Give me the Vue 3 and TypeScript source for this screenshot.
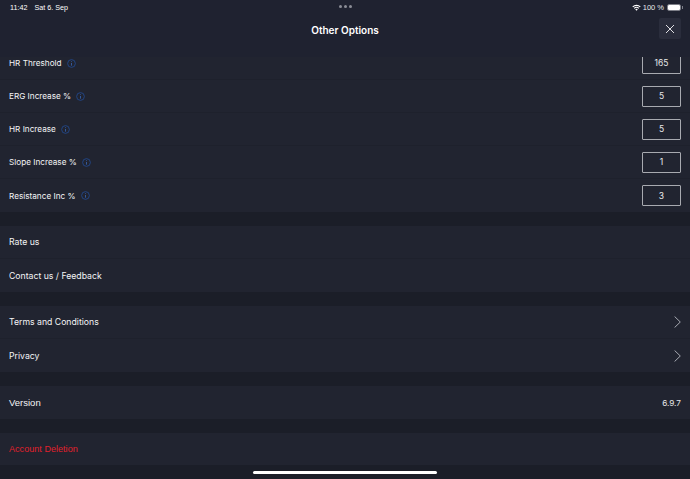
<script setup lang="ts">
interface InputRow {
  label: string
  value: string
}

const inputRows: InputRow[] = [
  { label: 'HR Threshold', value: '165' },
  { label: 'ERG Increase %', value: '5' },
  { label: 'HR Increase', value: '5' },
  { label: 'Slope Increase %', value: '1' },
  { label: 'Resistance Inc %', value: '3' },
]
</script>

<template>
  <div class="screen">
    <header class="top">
      <div class="status">
        <span class="time">11:42</span>
        <span class="date">Sat 6. Sep</span>
        <span class="dots"><i></i><i></i><i></i></span>
        <span class="status-right">
          <svg class="wifi" width="9" height="7" viewBox="0 0 11 8">
            <path d="M0.4 2.7A7.3 7.3 0 0 1 10.6 2.7L9.6 3.8A5.8 5.8 0 0 0 1.4 3.8Z" fill="#fff" />
            <path d="M2.2 4.5A4.8 4.8 0 0 1 8.8 4.5L7.8 5.5A3.4 3.4 0 0 0 3.2 5.5Z" fill="#fff" />
            <path d="M4 6.3A2.2 2.2 0 0 1 7 6.3L5.5 7.9Z" fill="#fff" />
          </svg>
          <span class="pct">100 %</span>
          <span class="battery"><b></b></span>
        </span>
      </div>
      <div class="title-bar">
        <h1>Other Options</h1>
        <button class="close" type="button" aria-label="Close">
          <svg width="10" height="10" viewBox="0 0 10 10">
            <path d="M1 1L9 9M9 1L1 9" stroke="#f4f4f6" stroke-width="0.9" fill="none" />
          </svg>
        </button>
      </div>
    </header>

    <main class="scroller">
      <div class="content">
        <section class="group">
          <div v-for="row in inputRows" :key="row.label" class="row">
            <span class="label">{{ row.label }}</span>
            <svg class="info" width="9" height="9" viewBox="0 0 10 10">
              <circle cx="5" cy="5" r="4.3" stroke="#234b94" stroke-width="0.9" fill="none" />
              <path d="M5 4.4V7.4M5 2.6V3.4" stroke="#3a66b5" stroke-width="0.9" fill="none" />
            </svg>
            <span class="box">{{ row.value }}</span>
          </div>
        </section>

        <section class="group">
          <div class="row"><span class="label wide">Rate us</span></div>
          <div class="row"><span class="label wide">Contact us / Feedback</span></div>
        </section>

        <section class="group">
          <div class="row">
            <span class="label wide">Terms and Conditions</span>
            <svg class="chevron" width="7" height="12" viewBox="0 0 7 12">
              <path d="M0.6 0.5L6.3 6L0.6 11.5" stroke="#a9abb3" stroke-width="1" fill="none" />
            </svg>
          </div>
          <div class="row">
            <span class="label wide">Privacy</span>
            <svg class="chevron" width="7" height="12" viewBox="0 0 7 12">
              <path d="M0.6 0.5L6.3 6L0.6 11.5" stroke="#a9abb3" stroke-width="1" fill="none" />
            </svg>
          </div>
        </section>

        <section class="group">
          <div class="row">
            <span class="label plain">Version</span>
            <span class="version">6.9.7</span>
          </div>
        </section>

        <section class="group">
          <div class="row short"><span class="label plain danger">Account Deletion</span></div>
        </section>
      </div>
    </main>

    <div class="home-bar"></div>
  </div>
</template>

<style>
html,
body {
  margin: 0;
  background: #1b1e28;
}
</style>

<style scoped>
.screen {
  position: relative;
  width: 690px;
  height: 479px;
  overflow: hidden;
  display: flex;
  flex-direction: column;
  background: #1b1e28;
  color: #fff;
  font-family: Inter, "Liberation Sans", sans-serif;
}

.top {
  height: 57px;
  flex: none;
  background: #1f2230;
}

.status {
  height: 14px;
  display: flex;
  align-items: center;
  position: relative;
  padding: 0 9px 0 10px;
  font-size: 7.2px;
  font-family: "Liberation Sans", sans-serif;
}

.date {
  margin-left: 7px;
}

.dots {
  position: absolute;
  left: 339px;
  top: 5px;
  display: flex;
  gap: 2px;
}

.dots i {
  width: 3px;
  height: 3px;
  border-radius: 50%;
  background: #8b8d96;
}

.status-right {
  margin-left: auto;
  display: flex;
  align-items: center;
  gap: 2px;
}

.pct {
  margin-right: 1px;
  font-size: 7.5px;
  color: #e8e8ea;
}

.battery {
  position: relative;
  width: 14px;
  height: 7px;
  border: 1px solid #7d7f88;
  border-radius: 2px;
  box-sizing: border-box;
  display: flex;
}

.battery::after {
  content: "";
  position: absolute;
  right: -3px;
  top: 1px;
  width: 1px;
  height: 3px;
  background: #7d7f88;
}

.battery b {
  flex: 1;
  background: #fff;
  border-radius: 1px;
}

.title-bar {
  height: 32px;
  display: flex;
  align-items: center;
  justify-content: center;
  position: relative;
}

h1 {
  margin: 0;
  font-size: 10px;
  font-weight: 600;
}

.close {
  position: absolute;
  right: 9px;
  top: 4px;
  width: 22px;
  height: 21px;
  padding: 0;
  border: 0;
  border-radius: 2px;
  background: #2a2d3c;
  display: flex;
  align-items: center;
  justify-content: center;
}

.scroller {
  flex: 1;
  overflow: hidden;
}

.content {
  margin-top: -10px;
}

.group {
  margin-bottom: 14px;
  background: #212430;
}

.row {
  height: 33px;
  box-sizing: border-box;
  display: flex;
  align-items: center;
  gap: 5px;
  padding: 0 9px;
  border-bottom: 1px solid #1e212c;
}

.row:last-child {
  border-bottom: 0;
}

.row.short {
  height: 32px;
}

.label {
  font-size: 8.2px;
  color: #f4f4f6;
}

.label.wide {
  font-size: 8.7px;
}

.label.plain {
  font-family: "Liberation Sans", sans-serif;
  font-size: 9.5px;
}

.label.danger {
  font-size: 9.1px;
  color: #e0202c;
}

.info {
  flex: none;
}

.box {
  margin-left: auto;
  width: 39px;
  height: 21px;
  box-sizing: border-box;
  border: 1px solid #a8aab0;
  border-radius: 1px;
  display: flex;
  align-items: center;
  justify-content: center;
  font-size: 8.5px;
  color: #e8e8ea;
}

.chevron {
  margin-left: auto;
}

.version {
  margin-left: auto;
  font-size: 8.2px;
  color: #e8e8ea;
}

.home-bar {
  position: absolute;
  left: 253px;
  top: 471px;
  width: 184px;
  height: 3px;
  border-radius: 2px;
  background: #fff;
}
</style>
